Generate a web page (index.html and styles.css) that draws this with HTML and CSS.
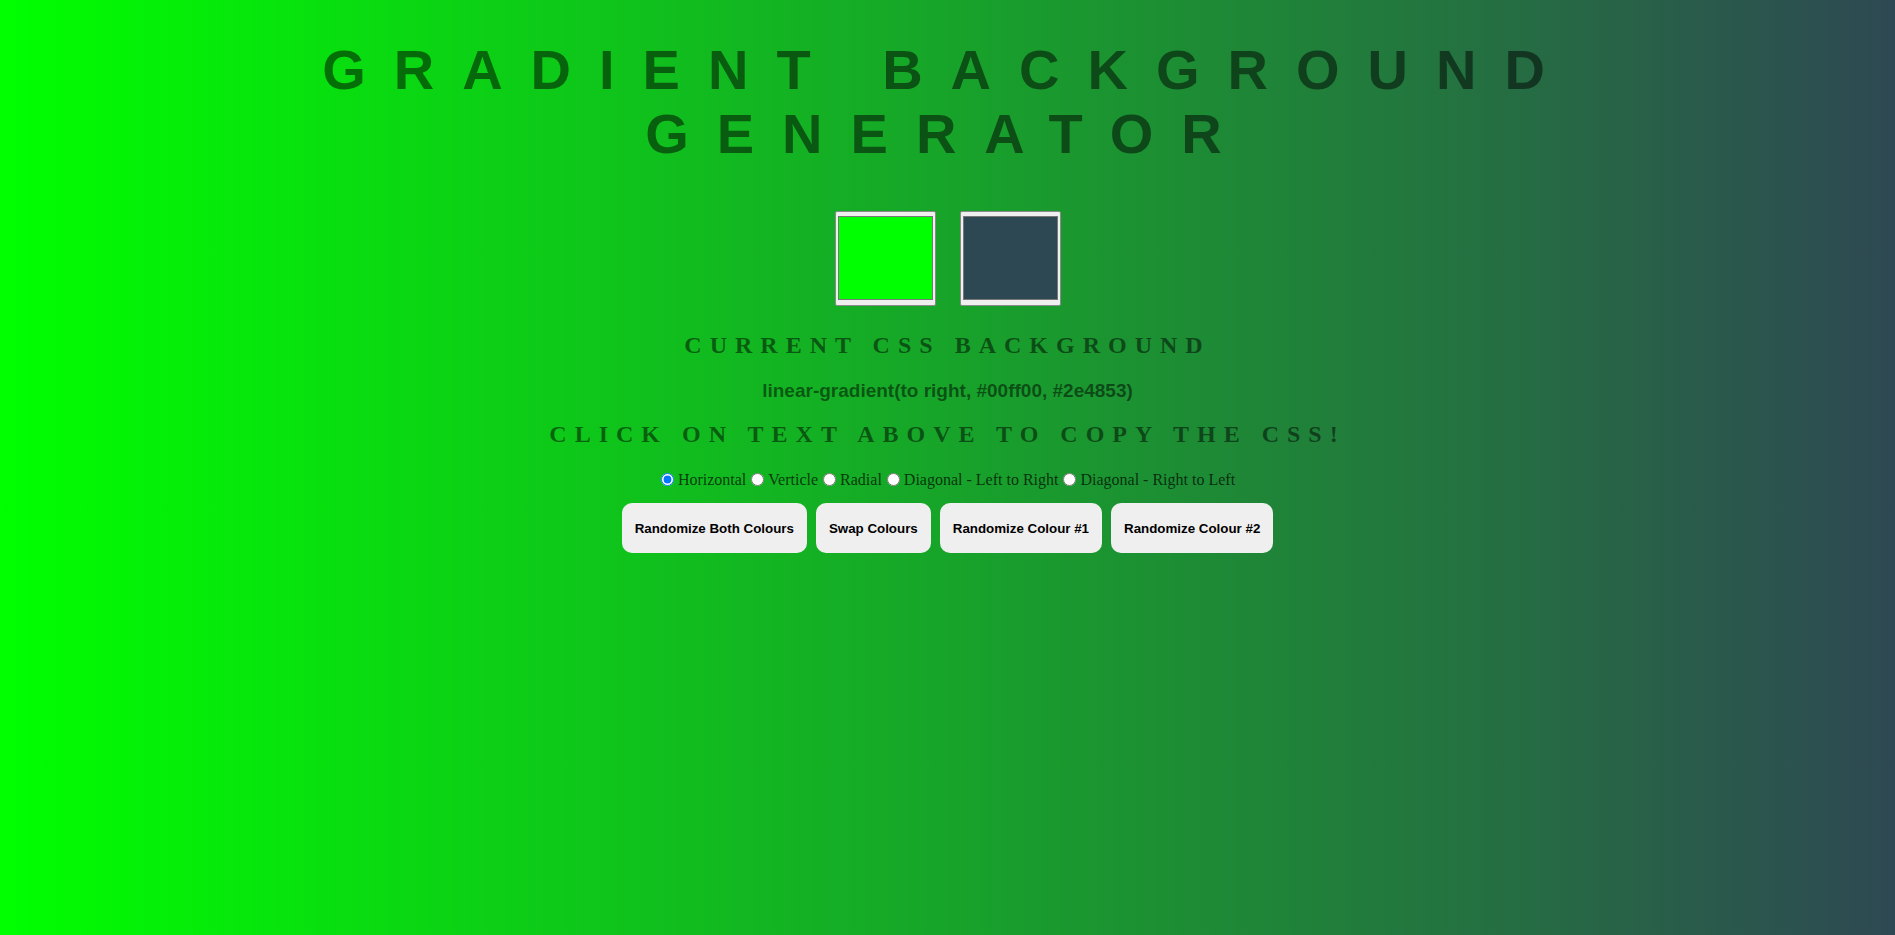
FILE: index.html
```html
<!DOCTYPE html>
<html lang="en">
<head>
<meta charset="utf-8">
<title>Gradient Background Generator</title>
<link rel="stylesheet" href="styles.css">
</head>
<body>
  <h1 class="title">Gradient Background Generator</h1>
  <div class="swatches">
    <input class="swatch" type="color" value="#00ff00">
    <input class="swatch" type="color" value="#2e4853">
  </div>
  <h3 class="heading heading-current">Current CSS Background</h3>
  <p class="css-text">linear-gradient(to right, #00ff00, #2e4853)</p>
  <h3 class="heading heading-copy">Click on text above to copy the CSS!</h3>
  <div class="radios"><input class="radio" type="radio" name="dir" checked>Horizontal <input class="radio" type="radio" name="dir">Verticle <input class="radio" type="radio" name="dir">Radial <input class="radio" type="radio" name="dir">Diagonal - Left to Right <input class="radio" type="radio" name="dir">Diagonal - Right to Left</div>
  <div class="buttons">
    <button class="btn">Randomize Both Colours</button>
    <button class="btn">Swap Colours</button>
    <button class="btn">Randomize Colour #1</button>
    <button class="btn">Randomize Colour #2</button>
  </div>
</body>
</html>
```

FILE: styles.css
```css
html {
  min-height: 100%;
}

body {
  margin: 0;
  min-height: 100vh;
  background: linear-gradient(to right, #00ff00, #2e4853);
  text-align: center;
  color: rgba(0, 0, 0, 0.5);
  font-family: "Liberation Serif", "Times New Roman", serif;
}

.title {
  margin: 37.5px 0 0;
  font-family: "Liberation Sans", Arial, sans-serif;
  font-weight: 700;
  font-size: 56px;
  line-height: 64.4px;
  letter-spacing: 28px;
  text-transform: uppercase;
  color: rgba(0, 0, 0, 0.5);
}

.swatches {
  display: flex;
  justify-content: center;
  gap: 24px;
  margin-top: 44.7px;
}

.swatch {
  width: 101px;
  height: 95px;
  box-sizing: border-box;
  padding: 1px 2px;
  border: 1px solid #8a8a8a;
  border-radius: 2px;
  background: #efefef;
  margin: 0;
}

.swatch::-webkit-color-swatch-wrapper {
  padding: 3px 0 4px;
}

.swatch::-webkit-color-swatch {
  border: 1px solid #777;
  border-radius: 0;
}

.heading {
  margin: 0;
  font-family: "Liberation Serif", "Times New Roman", serif;
  font-weight: 700;
  font-size: 24px;
  line-height: 28px;
  letter-spacing: 8px;
  text-transform: uppercase;
  color: rgba(0, 0, 0, 0.5);
}

.heading-current {
  margin-top: 25px;
}

.css-text {
  margin: 20.5px 0 0;
  font-family: "Liberation Sans", Arial, sans-serif;
  font-weight: 700;
  font-size: 19px;
  line-height: 22px;
  color: rgba(0, 0, 0, 0.5);
}

.heading-copy {
  margin-top: 18.5px;
}

.radios {
  margin-top: 22px;
  font-size: 16px;
  line-height: 18px;
  color: rgba(0, 0, 0, 0.7);
}

.radio {
  margin: 3px 4px 0 1px;
  width: 13px;
  height: 13px;
  vertical-align: -1px;
}

.buttons {
  display: flex;
  justify-content: center;
  gap: 9px;
  margin-top: 14px;
}

.btn {
  height: 50px;
  padding: 0 13px;
  border: none;
  border-radius: 10px;
  background: #efefef;
  color: #000;
  font-family: "Liberation Sans", Arial, sans-serif;
  font-weight: 700;
  font-size: 13.33px;
  cursor: pointer;
}
```
